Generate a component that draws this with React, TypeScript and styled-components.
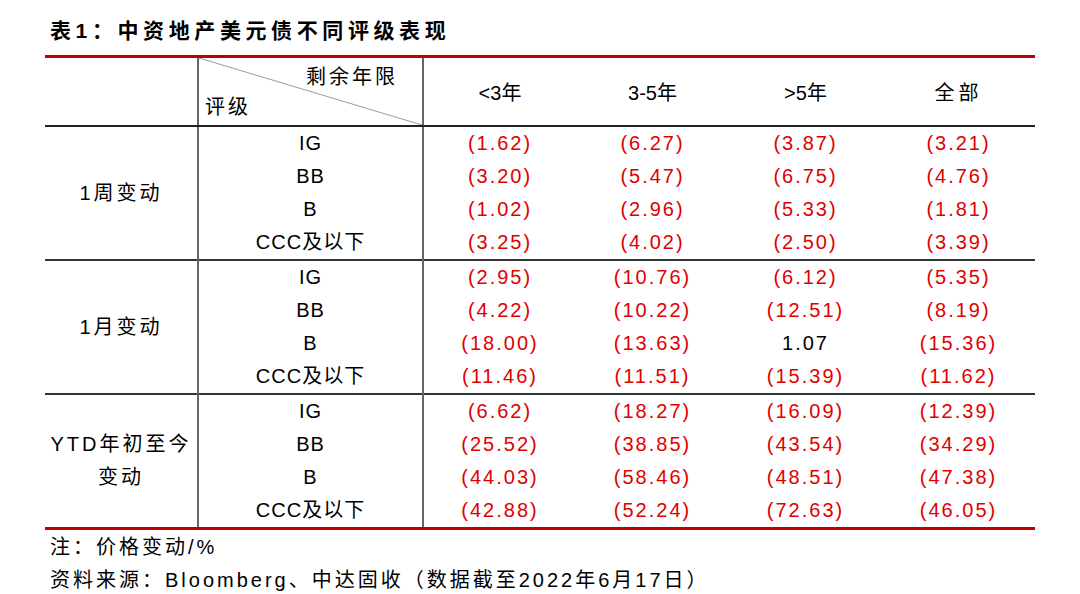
import { createGlobalStyle, styled } from 'styled-components';

const GlobalStyle = createGlobalStyle`
  html, body {
    margin: 0;
    padding: 0;
    background: #ffffff;
  }
  body {
    font-family: 'Liberation Sans', 'Noto Sans CJK SC', sans-serif;
    color: #000000;
  }
`;

const Page = styled.div`
  width: 1080px;
  height: 594px;
  padding: 17px 0 0 45px;
  box-sizing: border-box;
  overflow: hidden;
`;

const Title = styled.div`
  padding-left: 5px;
  font-family: 'Liberation Sans', 'Noto Sans CJK SC', sans-serif;
  font-size: 21px;
  font-weight: 700;
  letter-spacing: 4.6px;
  line-height: 28px;
  margin-bottom: 10px;
`;

const Table = styled.table`
  width: 990px;
  border-collapse: collapse;
  table-layout: fixed;
  border-top: 3px solid #c00000;
  border-bottom: 3px solid #c00000;
`;

const HeadCell = styled.th`
  height: 67px;
  padding: 0;
  font-size: 20px;
  font-weight: 400;
  text-align: center;
  letter-spacing: ${(p: { $spaced?: boolean }) => (p.$spaced ? '4px' : '0')};
  border-bottom: 2px solid #222;
`;

const CornerCell = styled.th`
  position: relative;
  height: 67px;
  padding: 0;
  font-weight: 400;
  border-left: 2px solid #666;
  border-right: 2px solid #666;
  border-bottom: 2px solid #222;
`;

const Diagonal = styled.svg`
  position: absolute;
  left: 0;
  top: 0;
  width: 100%;
  height: 100%;
`;

const CornerText = styled.div`
  display: flex;
  flex-direction: column;
  height: 67px;
  padding-top: 5px;
  box-sizing: border-box;
  font-size: 20px;
  letter-spacing: 3px;
  line-height: 28px;
`;

const CornerTop = styled.span`
  align-self: flex-end;
  padding-right: 24px;
`;

const CornerBottom = styled.span`
  align-self: flex-start;
  padding-left: 6px;
  margin-top: 2px;
`;

const Row = styled.tr<{ $first?: boolean }>`
  border-top: ${(p) => (p.$first ? '2px solid #333' : 'none')};
`;

const GroupCell = styled.td`
  padding: 0;
  font-size: 20px;
  letter-spacing: 3px;
  line-height: 33px;
  text-align: center;
  vertical-align: middle;
`;

const RatingCell = styled.td`
  height: 33px;
  padding: 0;
  font-size: 20px;
  letter-spacing: 1px;
  line-height: 33px;
  text-align: center;
  border-left: 2px solid #666;
  border-right: 2px solid #666;
`;

const ValueCell = styled.td<{ $neg: boolean }>`
  height: 33px;
  padding: 0;
  font-size: 20px;
  letter-spacing: 2px;
  line-height: 33px;
  text-align: center;
  color: ${(p) => (p.$neg ? '#e00000' : '#000000')};
`;

const Notes = styled.div`
  padding-left: 5px;
  margin-top: 1px;
  font-size: 20px;
  letter-spacing: 3px;
  line-height: 33px;
`;

const columns = ['<3年', '3-5年', '>5年', '全部'];
const ratings = ['IG', 'BB', 'B', 'CCC及以下'];

const groups = [
  {
    label: ['1周变动'],
    rows: [
      ['(1.62)', '(6.27)', '(3.87)', '(3.21)'],
      ['(3.20)', '(5.47)', '(6.75)', '(4.76)'],
      ['(1.02)', '(2.96)', '(5.33)', '(1.81)'],
      ['(3.25)', '(4.02)', '(2.50)', '(3.39)'],
    ],
  },
  {
    label: ['1月变动'],
    rows: [
      ['(2.95)', '(10.76)', '(6.12)', '(5.35)'],
      ['(4.22)', '(10.22)', '(12.51)', '(8.19)'],
      ['(18.00)', '(13.63)', '1.07', '(15.36)'],
      ['(11.46)', '(11.51)', '(15.39)', '(11.62)'],
    ],
  },
  {
    label: ['YTD年初至今', '变动'],
    rows: [
      ['(6.62)', '(18.27)', '(16.09)', '(12.39)'],
      ['(25.52)', '(38.85)', '(43.54)', '(34.29)'],
      ['(44.03)', '(58.46)', '(48.51)', '(47.38)'],
      ['(42.88)', '(52.24)', '(72.63)', '(46.05)'],
    ],
  },
];

export default function App() {
  return (
    <Page>
      <GlobalStyle />
      <Title>表1：中资地产美元债不同评级表现</Title>
      <Table>
        <colgroup>
          <col style={{ width: 153 }} />
          <col style={{ width: 225 }} />
          <col style={{ width: 153 }} />
          <col style={{ width: 153 }} />
          <col style={{ width: 153 }} />
          <col style={{ width: 153 }} />
        </colgroup>
        <thead>
          <tr>
            <HeadCell />
            <CornerCell>
              <Diagonal viewBox="0 0 100 100" preserveAspectRatio="none">
                <line x1="0" y1="0" x2="100" y2="100" stroke="#9a9a9a" strokeWidth="1" vectorEffect="non-scaling-stroke" />
              </Diagonal>
              <CornerText>
                <CornerTop>剩余年限</CornerTop>
                <CornerBottom>评级</CornerBottom>
              </CornerText>
            </CornerCell>
            {columns.map((c) => (
              <HeadCell key={c} $spaced={c === '全部'}>
                {c}
              </HeadCell>
            ))}
          </tr>
        </thead>
        <tbody>
          {groups.map((g, gi) =>
            g.rows.map((vals, ri) => (
              <Row key={`${gi}-${ri}`} $first={ri === 0 && gi > 0}>
                {ri === 0 && (
                  <GroupCell rowSpan={4}>
                    {g.label.map((l) => (
                      <div key={l}>{l}</div>
                    ))}
                  </GroupCell>
                )}
                <RatingCell>{ratings[ri]}</RatingCell>
                {vals.map((v, vi) => (
                  <ValueCell key={vi} $neg={v.startsWith('(')}>
                    {v}
                  </ValueCell>
                ))}
              </Row>
            ))
          )}
        </tbody>
      </Table>
      <Notes>
        <div>注：价格变动/%</div>
        <div>资料来源：Bloomberg、中达固收（数据截至2022年6月17日）</div>
      </Notes>
    </Page>
  );
}
